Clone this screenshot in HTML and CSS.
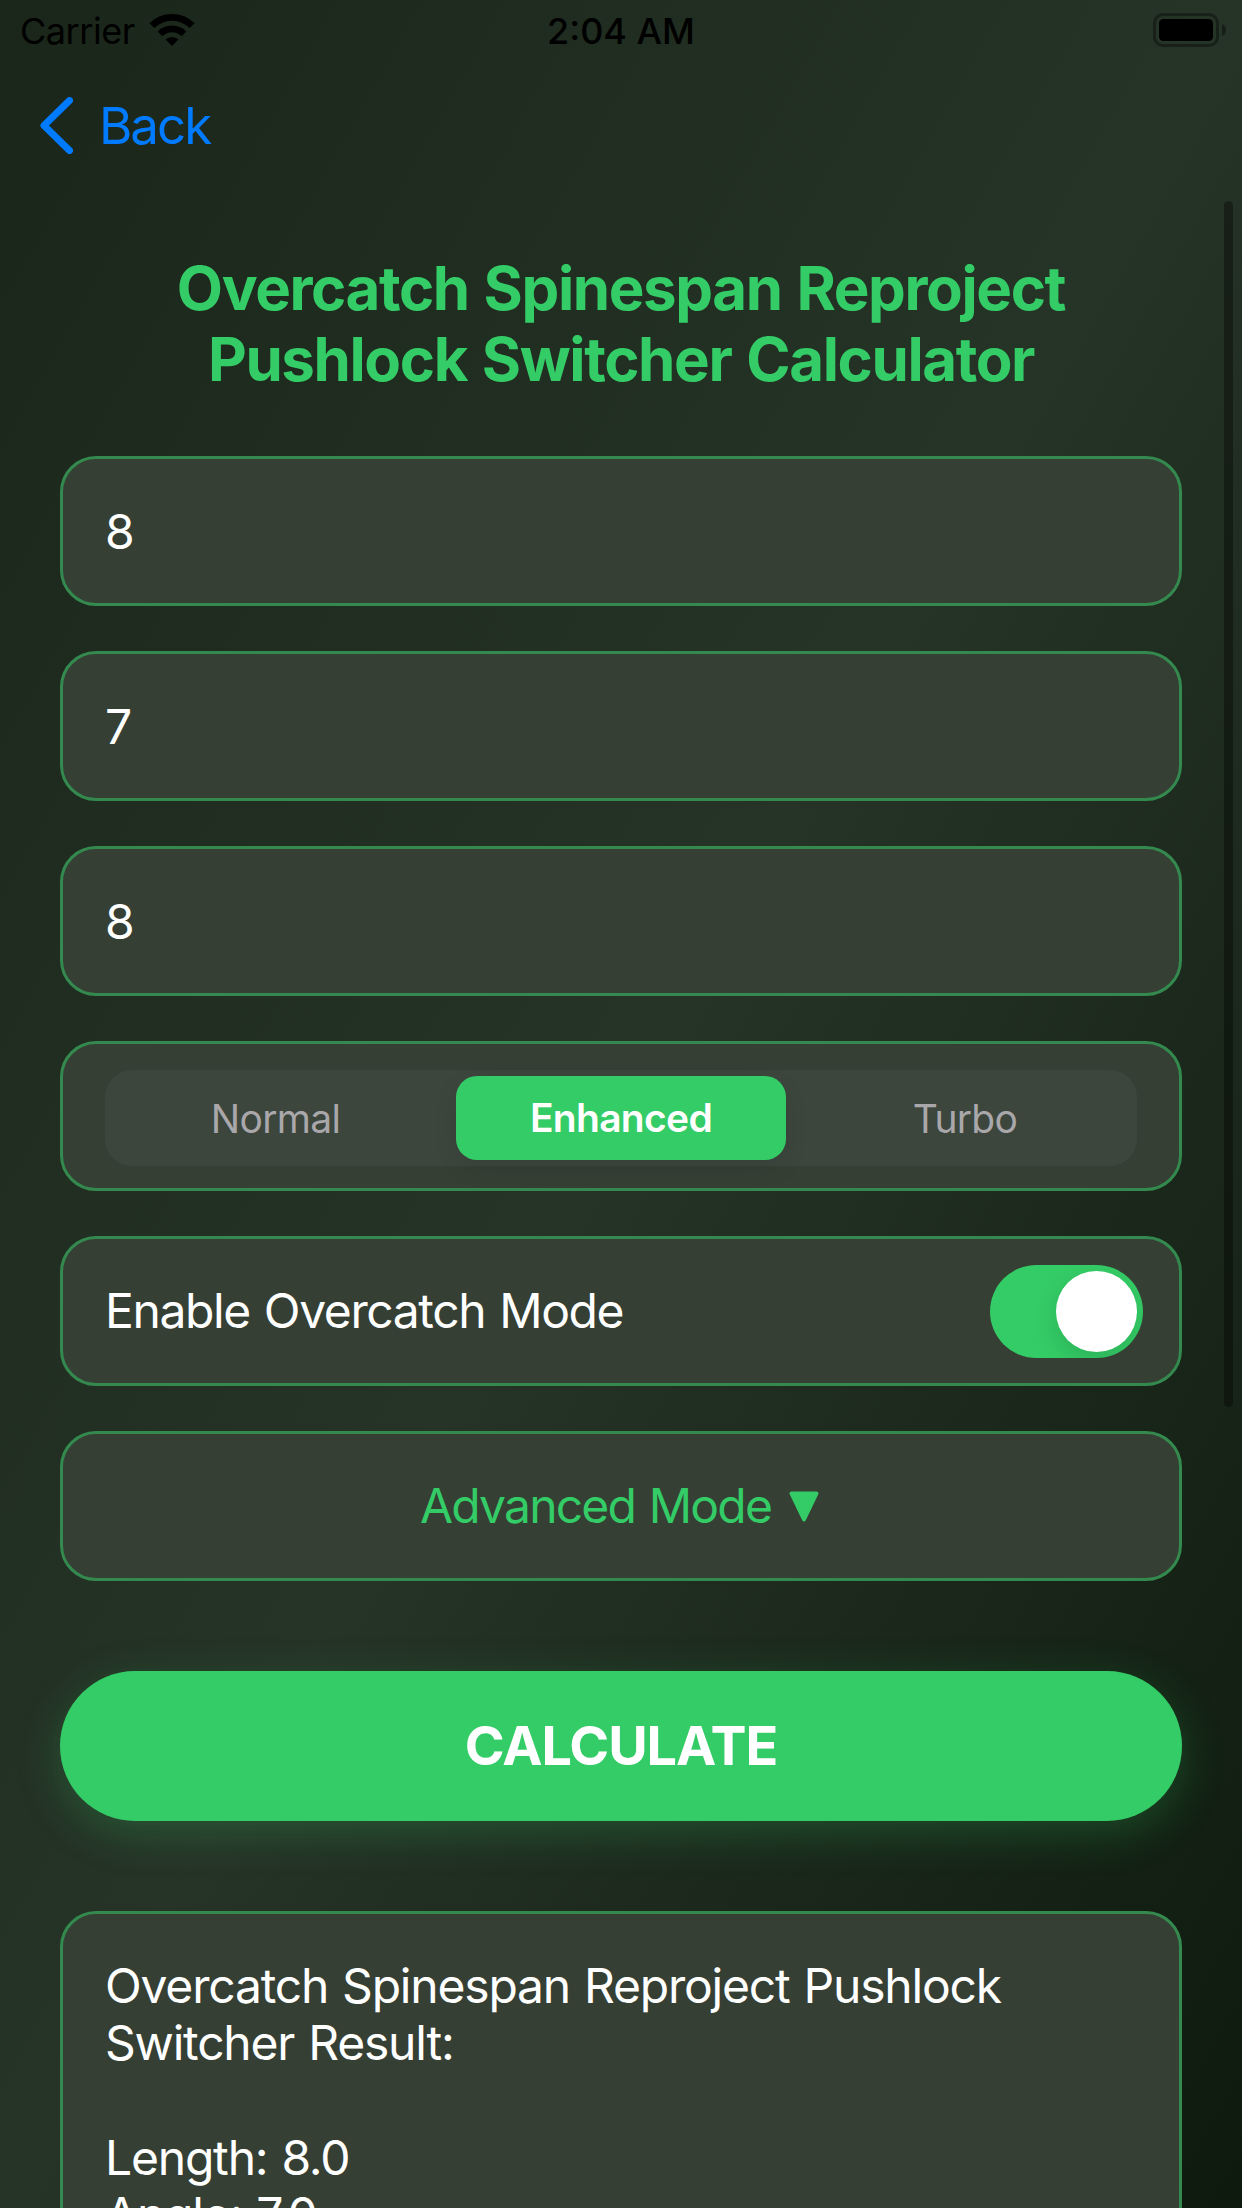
FILE: index.html
```html
<!DOCTYPE html>
<html lang="en">
<head>
<meta charset="utf-8">
<title>Overcatch Calculator</title>
<link rel="stylesheet" href="styles.css">
</head>
<body>
<div class="screen">
  <header class="status">
    <div class="status-left">
      <span class="carrier">Carrier</span>
      <svg class="wifi" width="46" height="34" viewBox="0 0 46 34">
        <path d="M0.5 10.2 A32 32 0 0 1 45.5 10.2 L40.6 15 A25 25 0 0 0 5.4 15 Z"/>
        <path d="M8.6 18.4 A20.5 20.5 0 0 1 37.4 18.4 L32.6 23.2 A13.7 13.7 0 0 0 13.4 23.2 Z"/>
        <path d="M16.6 26.5 A9.2 9.2 0 0 1 29.4 26.5 L23 33 Z"/>
      </svg>
    </div>
    <span class="time">2:04 AM</span>
    <svg class="battery" width="74" height="34" viewBox="0 0 74 34">
      <rect x="1.5" y="1.5" width="63" height="31" rx="8.5" fill="none" stroke="#000" stroke-opacity=".35" stroke-width="3"/>
      <rect x="6" y="6" width="54" height="22" rx="4.5"/>
      <path d="M69 11 A6.5 6.5 0 0 1 69 23 Z" fill-opacity=".4"/>
    </svg>
  </header>
  <nav class="nav">
    <svg class="chevron" width="33" height="57" viewBox="0 0 33 57">
      <path d="M29.5 3.5 L4 28.5 L29.5 53.5" fill="none" stroke="#007aff" stroke-width="7" stroke-linecap="round" stroke-linejoin="round"/>
    </svg>
    <a class="back">Back</a>
  </nav>
  <main class="content">
    <h1 class="title">Overcatch Spinespan Reproject<br>Pushlock Switcher Calculator</h1>
    <div class="card">8</div>
    <div class="card">7</div>
    <div class="card">8</div>
    <div class="card card-segments">
      <div class="segments">
        <span class="segment normal">Normal</span>
        <span class="segment selected">Enhanced</span>
        <span class="segment turbo">Turbo</span>
      </div>
    </div>
    <div class="card card-toggle">
      <span class="label">Enable Overcatch Mode</span>
      <span class="switch"><span class="knob"></span></span>
    </div>
    <div class="card card-advanced">
      <span class="label advanced">Advanced Mode</span>
      <svg class="triangle" width="30" height="31" viewBox="0 0 30 31">
        <path d="M2.5 2.5 H27.5 L15 28.5 Z" fill="#34cc66" stroke="#34cc66" stroke-width="4" stroke-linejoin="round"/>
      </svg>
    </div>
    <div class="button">CALCULATE</div>
    <section class="result">
      <p class="line">Overcatch Spinespan Reproject Pushlock</p>
      <p class="line">Switcher Result:</p>
      <p class="line">&nbsp;</p>
      <p class="line">Length: 8.0</p>
      <p class="line">Angle: 7.0</p>
    </section>
  </main>
  <div class="scrollbar"></div>
</div>
</body>
</html>
```
FILE: styles.css
```css
* { box-sizing: border-box; }

body { margin: 0; }

.screen {
  position: relative;
  width: 1242px;
  height: 2208px;
  overflow: hidden;
  background: linear-gradient(to bottom right, #1a261a, #263327 50%, #0d1a0d);
  font-family: Inter, "Liberation Sans", sans-serif;
  color: #fff;
}

.status {
  display: grid;
  grid-template-columns: 1fr auto 1fr;
  height: 60px;
  padding: 13px 15px 0;
  line-height: 36px;
  font-size: 36px;
  color: #000;
}

.status-left { display: flex; gap: 14px; padding-left: 5px; }
.carrier { letter-spacing: -.45px; }
.time { font-weight: 500; }
.battery { justify-self: end; }

.nav {
  display: flex;
  align-items: center;
  gap: 26px;
  height: 131px;
  padding: 0 40px;
  line-height: 60px;
}

.back { font-size: 51px; letter-spacing: -2px; color: #007aff; }

.content {
  display: flex;
  flex-direction: column;
  gap: 45px;
  padding: 62px 60px 0;
}

.title {
  margin: 0 0 13px;
  height: 145px;
  font-size: 60px;
  font-weight: 700;
  line-height: 71px;
  letter-spacing: -1.4px;
  word-spacing: 2px;
  text-align: center;
  color: #34cc66;
  white-space: nowrap;
}

.card, .result {
  flex: none;
  border: 3px solid #348a4e;
  border-radius: 36px;
  background: #353f34;
}

.card {
  display: flex;
  align-items: center;
  height: 150px;
  padding: 0 42px;
  font-size: 48px;
}

.label {
  margin-bottom: 2px;
  letter-spacing: -1.4px;
  word-spacing: 2px;
}

.segments {
  display: grid;
  grid-template-columns: 345px 330px 345px;
  align-items: center;
  width: 1032px;
  height: 96px;
  margin-top: 4px;
  padding: 0 6px;
  border-radius: 27px;
  background: #3c463d;
  font-size: 39px;
  letter-spacing: -.7px;
  text-align: center;
  color: #a9a7aa;
}

.normal { padding-right: 16px; }
.turbo { padding-left: 13px; }

.selected {
  height: 84px;
  border-radius: 21px;
  background: #34cc66;
  box-shadow: 0 9px 24px rgba(0, 0, 0, .08);
  line-height: 84px;
  font-weight: 600;
  color: #fff;
}

.card-toggle { justify-content: space-between; padding-right: 36px; }

.switch {
  display: flex;
  justify-content: flex-end;
  width: 153px;
  height: 93px;
  margin-top: 1px;
  padding: 6px;
  border-radius: 47px;
  background: #34cc66;
  overflow: hidden;
}

.knob {
  width: 81px;
  height: 81px;
  border-radius: 50%;
  background: #fff;
  box-shadow: 0 9px 24px rgba(0, 0, 0, .13);
}

.card-advanced { justify-content: center; gap: 18px; padding-right: 45px; color: #34cc66; }
.advanced { letter-spacing: -1.8px; }

.button {
  flex: none;
  height: 150px;
  margin: 45px 0;
  border-radius: 75px;
  background: #34cc66;
  box-shadow: 0 12px 45px rgba(52, 204, 102, .24);
  line-height: 150px;
  font-size: 54px;
  font-weight: 700;
  letter-spacing: -1.1px;
  text-align: center;
}

.result {
  height: 420px;
  padding: 43px 42px;
  font-size: 48px;
  letter-spacing: -1.2px;
  word-spacing: 1.7px;
  white-space: nowrap;
}

.line { margin: 0; line-height: 57.3px; }

.scrollbar {
  position: absolute;
  top: 201px;
  right: 9px;
  width: 9px;
  height: 1206px;
  border-radius: 5px;
  background: rgba(0, 0, 0, .35);
}
```
